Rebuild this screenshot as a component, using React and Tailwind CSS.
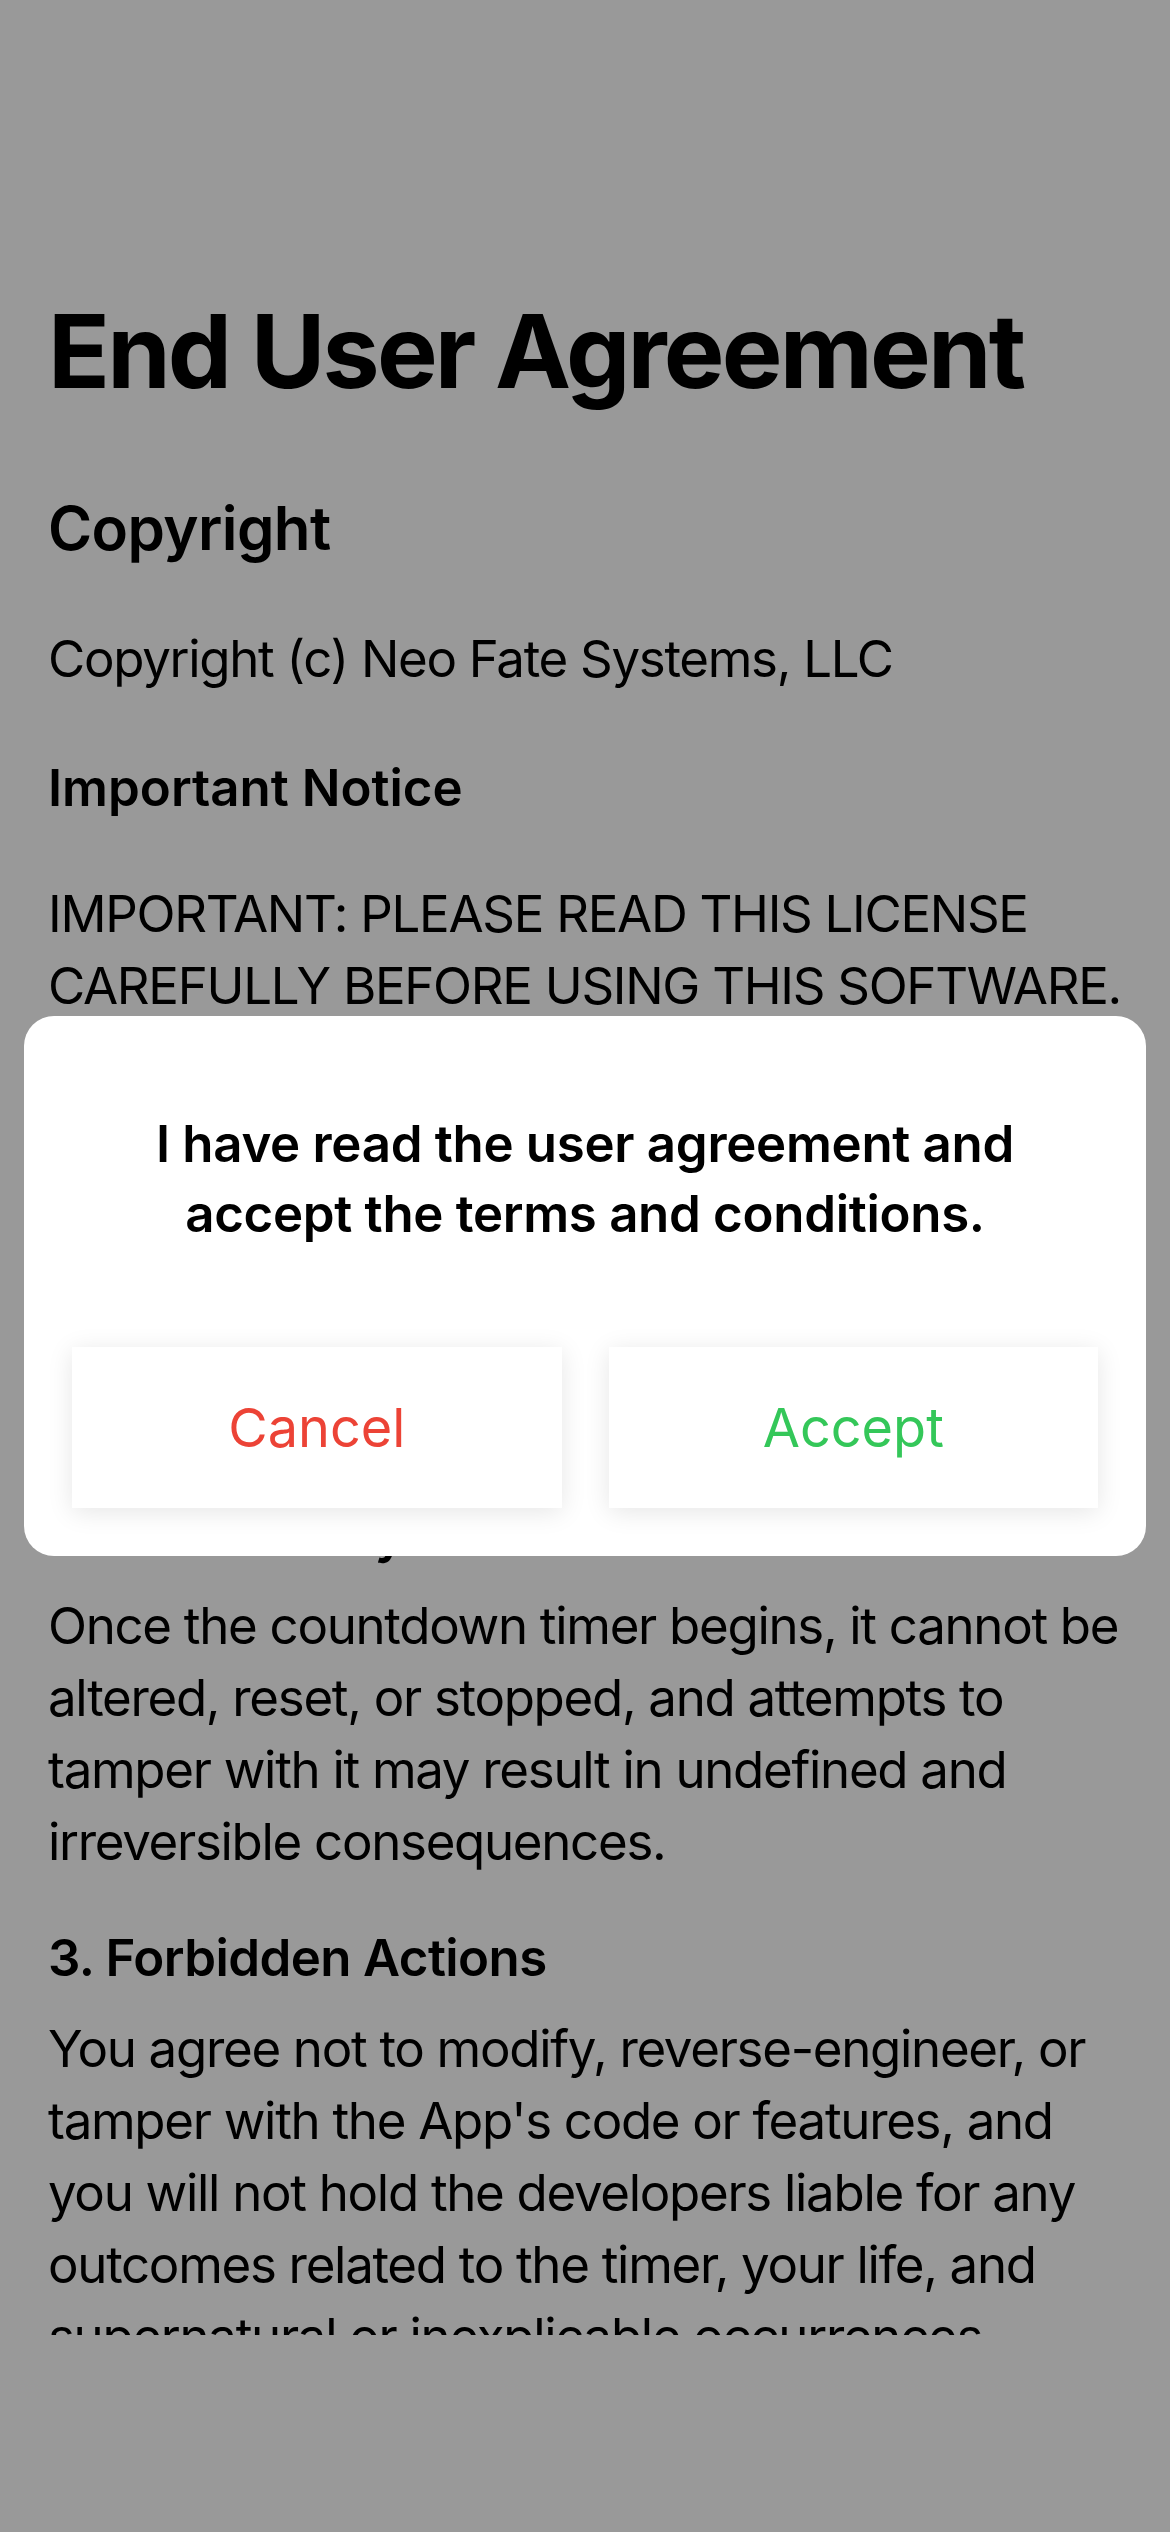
import React from 'react';

const SECTIONS_TOP = [
  { heading: 'Copyright', lines: ['Copyright (c) Neo Fate Systems, LLC'] },
];

const Lines = ({ lines, className }) => (
  <div className={className}>
    {lines.map((l, i) => (
      <span key={i} className="block whitespace-nowrap">{l}</span>
    ))}
  </div>
);

const Section = ({ heading, lines, first }) => (
  <div className={first ? 'mt-[54px]' : 'mt-[44px]'}>
    <h3 className="text-[51px] leading-[72px] font-semibold tracking-[-0.6px]">{heading}</h3>
    <Lines lines={lines} className="mt-[19px] text-[51px] leading-[72px] tracking-[-1.3px]" />
  </div>
);

export default function App() {
  return (
    <div className="relative h-[2532px] w-[1170px] bg-[#999999] text-black font-[Inter,sans-serif]">
      {/* scrolling agreement text */}
      <div className="h-[2335px] overflow-hidden px-[48px] pt-[290px]">
        <h1 className="text-[102px] leading-[122px] font-bold tracking-[-2.8px]">End User Agreement</h1>

        <h2 className="mt-[80px] text-[60px] leading-[72px] font-semibold tracking-[-0.6px]">{SECTIONS_TOP[0].heading}</h2>
        <Lines lines={SECTIONS_TOP[0].lines} className="mt-[59px] text-[51px] leading-[72px] tracking-[-1.3px]" />

        <h3 className="mt-[57px] text-[51px] leading-[72px] font-semibold">Important Notice</h3>
        <Lines
          lines={['IMPORTANT: PLEASE READ THIS LICENSE', 'CAREFULLY BEFORE USING THIS SOFTWARE.']}
          className="mt-[54px] text-[51px] leading-[72px] tracking-[-1.3px]"
        />

        <Section
          first
          heading="1. Acceptance of Terms"
          lines={[
            'By downloading, installing, or using this App,',
            'you acknowledge that you have read and',
            'understood this agreement and agree to be',
            'bound by all of its terms and conditions.',
          ]}
        />
        <Section
          heading="2. Timer Policy"
          lines={[
            'Once the countdown timer begins, it cannot be',
            'altered, reset, or stopped, and attempts to',
            'tamper with it may result in undefined and',
            'irreversible consequences.',
          ]}
        />
        <Section
          heading="3. Forbidden Actions"
          lines={[
            'You agree not to modify, reverse-engineer, or',
            "tamper with the App's code or features, and",
            'you will not hold the developers liable for any',
            'outcomes related to the timer, your life, and',
            'supernatural or inexplicable occurrences.',
          ]}
        />
      </div>

      {/* confirmation dialog */}
      <div className="absolute left-[24px] top-[1016px] w-[1122px] h-[540px] bg-white rounded-[30px] px-[48px] pt-[93px] pb-[48px] flex flex-col">
        <p className="text-center text-[51px] leading-[70px] font-semibold tracking-[-0.3px]">
          I have read the user agreement and
          <br />
          accept the terms and conditions.
        </p>
        <div className="mt-auto flex gap-[47px]">
          <button className="flex-1 h-[161px] bg-white shadow-[0_4px_24px_rgba(0,0,0,0.10)] text-[54px] text-[#ec4336]">
            Cancel
          </button>
          <button className="flex-1 h-[161px] bg-white shadow-[0_4px_24px_rgba(0,0,0,0.10)] text-[54px] text-[#34c759]">
            Accept
          </button>
        </div>
      </div>
    </div>
  );
}
